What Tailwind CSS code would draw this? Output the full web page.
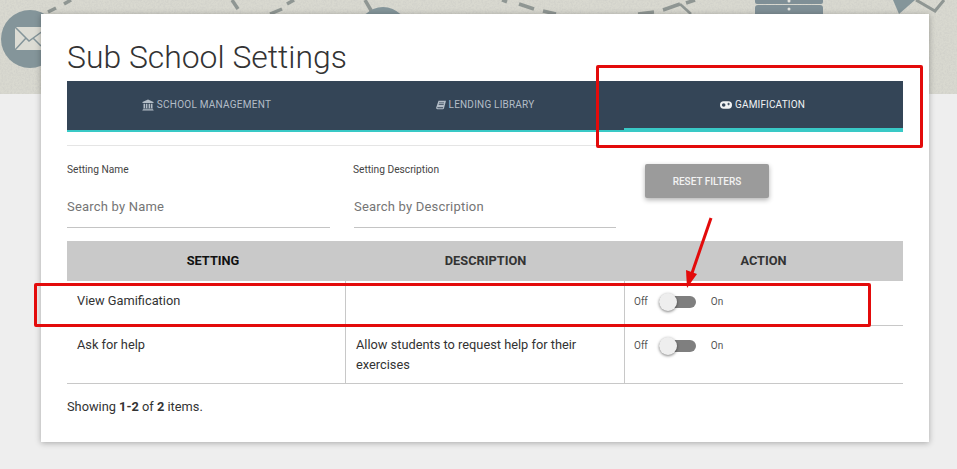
<!DOCTYPE html>
<html lang="en">
<head>
    <meta charset="UTF-8">
    <meta name="viewport" content="width=device-width, initial-scale=1.0">
    <title>Sub School Settings</title>
    <script src="https://cdn.jsdelivr.net/npm/@tailwindcss/browser@4"></script>
</head>
<body class="relative h-[469px] w-[957px] overflow-hidden bg-[#eeeeee] font-['Roboto',sans-serif] text-[#333333]">

    <!-- Banner background -->
    <svg class="absolute left-0 top-0" width="957" height="94" viewBox="0 0 957 94">
        <filter id="grain">
            <feTurbulence type="fractalNoise" baseFrequency="0.55" numOctaves="3" seed="4"/>
            <feColorMatrix type="matrix" values="0 0 0 0 0.62  0 0 0 0 0.62  0 0 0 0 0.58  1.6 0 0 0 -0.55"/>
        </filter>
        <rect width="957" height="94" fill="#d9d9d0"/>
        <rect width="957" height="94" filter="url(#grain)"/>
        <g fill="none" stroke="#8f9693" stroke-width="3.500">
            <path d="M48 12 L56 8"/>
            <path d="M64 4 L71 0"/>
            <path d="M232 0 L238 9"/>
            <path d="M270 14 L282 9"/>
            <path d="M287 4 L294 0"/>
            <path d="M365 0 L372 12"/>
            <path d="M502 0 L507 2"/>
            <path d="M519 4 L534 9"/>
            <path d="M543 11 L556 14"/>
            <path d="M638 14 L654 12"/>
            <path d="M663 10 L680 4"/>
            <path d="M686 3 L695 0"/>
            <path d="M680 4 L691 14" stroke-width="2.500"/>
        </g>
        <circle cx="30" cy="39" r="29" fill="#84959a"/>
        <rect x="15" y="27" width="32" height="23" fill="#dcdcd4"/>
        <path d="M15 27 L29 41 L47 28 M15 50 L26 38 M33 38 L41 46" fill="none" stroke="#84959a" stroke-width="1.500"/>
        <circle cx="383" cy="32" r="25" fill="#84959a"/>
        <rect x="755" y="-8" width="68" height="12" rx="2" fill="#7f8f96"/>
        <rect x="755" y="5" width="68" height="13" rx="3" fill="#7f8f96"/>
        <circle cx="789" cy="1" r="1.500" fill="#e4e4de"/>
        <circle cx="789" cy="9" r="1.500" fill="#e4e4de"/>
        <path d="M893 0 L899 14 L915 0 Z" fill="#84959a"/>
        <path d="M916 0 L935 11 L944 0" fill="none" stroke="#8f9693" stroke-width="3"/>
    </svg>

    <!-- Card -->
    <main class="relative ml-[41px] mt-[14px] h-[428px] w-[888px] bg-white px-[26px] shadow-[0_1px_6px_rgba(0,0,0,0.3)]">
        <h1 class="pt-[24px] text-[31.900px] font-light leading-[38px] text-[#333333]">Sub School Settings</h1>

        <!-- Tabs -->
        <nav class="mt-[5px] grid h-[51px] grid-cols-[279px_278px_279px] border-b-2 border-[#39c9c6] bg-[#344557] text-[10px] uppercase">
            <a class="flex items-center justify-center gap-[3px] pb-[2px] tracking-[0.25px] text-[#b3bdc7]">
                <svg width="12" height="12" viewBox="0 0 12 12" fill="#b3bdc7"><path d="M6 .5 11.500 3v1H.5V3zM1.500 4.800h1.700v4.400H1.500zM4 4.800h1.400v4.400H4zM6.600 4.800H8v4.400H6.600zM8.800 4.800h1.700v4.400H8.800zM1 9.700h10v.8H1zM.4 10.800h11.200v.8H.4z"/></svg>
                School Management
            </a>
            <a class="flex items-center justify-center gap-[3px] pb-[2px] tracking-[0.2px] text-[#b3bdc7]">
                <svg width="10" height="10" viewBox="0 0 10 10" fill="#b3bdc7"><path d="M2.500 .8H10L8 8.200c-.2.700-.6 1-1.300 1H1.500C.5 9.200 0 8.500.2 7.500zM3 2.500v.8h5v-.8zM2.700 4v.8h5V4zM1.400 7.300c-.2.500 0 .9.500.9h5l.3-.9z" fill-rule="evenodd"/></svg>
                Lending Library
            </a>
            <a class="-mb-[2px] flex items-center justify-center gap-[3px] border-b-4 border-[#39c9c6] pr-[2px] tracking-[0.15px] text-[#f0f2f4]">
                <svg width="12" height="8" viewBox="0 0 12 8"><rect width="12" height="7.500" y=".2" rx="3.700" fill="#f0f2f4"/><circle cx="3.700" cy="4" r="1.800" fill="#344557"/><path d="M7.300 3h2.600M8.600 1.800v2.500" stroke="#344557" stroke-width=".9"/></svg>
                Gamification
            </a>
        </nav>

        <hr class="mt-[13px] border-[#e5e5e5]">

        <!-- Filters -->
        <section class="flex h-[95px] items-start">
            <label class="mt-[18px] block w-[263px]">
                <span class="block text-[10.200px] leading-[12px] text-[#444444]">Setting Name</span>
                <span class="mt-[16px] block h-[36px] border-b border-[#c4c4c4] pt-[5px] text-[13px] leading-[20px] tracking-[0.2px] text-[#757575]">Search by Name</span>
            </label>
            <label class="ml-[24px] mt-[18px] block w-[262px]">
                <span class="-ml-[1px] block text-[10.200px] leading-[12px] text-[#444444]">Setting Description</span>
                <span class="mt-[16px] block h-[36px] border-b border-[#c4c4c4] pt-[5px] text-[13px] leading-[20px] tracking-[0.2px] text-[#757575]">Search by Description</span>
            </label>
            <button class="ml-[29px] mt-[18px] h-[34px] w-[124px] rounded-[2px] bg-[#9b9b9b] text-[10px] font-medium uppercase text-[#f2f2f2] shadow-[0_2px_5px_rgba(0,0,0,0.3)]">Reset Filters</button>
        </section>

        <!-- Table -->
        <div class="grid h-[40px] grid-cols-[278px_279px_279px] items-center bg-[#c9c9c9] text-center text-[12.800px] font-bold text-[#222222]">
            <div class="pl-[14px] text-[#111111]">SETTING</div>
            <div class="pl-[2px] text-[#333333]">DESCRIPTION</div>
            <div class="text-[#333333]">ACTION</div>
        </div>
        <div class="grid h-[45px] grid-cols-[278px_279px_279px] border-b border-[#c8c8c8] text-[12.800px] leading-[20px]">
            <div class="pl-[10px] pt-[10px]">View Gamification</div>
            <div class="border-l border-[#c8c8c8]"></div>
            <div class="flex items-start border-l border-[#c8c8c8] pl-[9px] pt-[12px] text-[10px] leading-[18px] text-[#555555]">
                <span>Off</span>
                <span class="relative ml-[11px] mt-[3px] h-[12px] w-[37px] rounded-full bg-[#7f7f7f]"><span class="absolute left-0 top-[-3px] h-[18px] w-[18px] rounded-full bg-[#eeeeee] shadow-[0_1px_3px_rgba(0,0,0,0.5)]"></span></span>
                <span class="ml-[15px]">On</span>
            </div>
        </div>
        <div class="grid h-[58px] grid-cols-[278px_279px_279px] border-b border-[#c8c8c8] text-[12.800px] leading-[20px]">
            <div class="pl-[10px] pt-[9px]">Ask for help</div>
            <div class="border-l border-[#c8c8c8] px-[10px] pt-[9px]">Allow students to request help for their exercises</div>
            <div class="flex items-start border-l border-[#c8c8c8] pl-[9px] pt-[11px] text-[10px] leading-[18px] text-[#555555]">
                <span>Off</span>
                <span class="relative ml-[11px] mt-[3px] h-[12px] w-[37px] rounded-full bg-[#7f7f7f]"><span class="absolute left-0 top-[-3px] h-[18px] w-[18px] rounded-full bg-[#eeeeee] shadow-[0_1px_3px_rgba(0,0,0,0.5)]"></span></span>
                <span class="ml-[15px]">On</span>
            </div>
        </div>

        <p class="mt-[13px] text-[12.800px] leading-[20px]">Showing <b class="font-bold">1-2</b> of <b class="font-bold">2</b> items.</p>
    </main>

    <!-- Red annotations drawn over the screenshot -->
    <div class="absolute left-[596px] top-[65px] h-[83px] w-[327px] rounded-[2px] border-[3px] border-[#e30b0b]"></div>
    <div class="absolute left-[34px] top-[283px] h-[44px] w-[837px] rounded-[2px] border-[3px] border-[#e30b0b]"></div>
    <svg class="absolute left-[680px] top-[214px]" width="36" height="76" viewBox="0 0 36 76">
        <path d="M31 4 L11 62" stroke="#e30b0b" stroke-width="3" fill="none"/>
        <path d="M7 74 L6 56 L17 60 Z" fill="#e30b0b"/>
    </svg>
</body>
</html>
